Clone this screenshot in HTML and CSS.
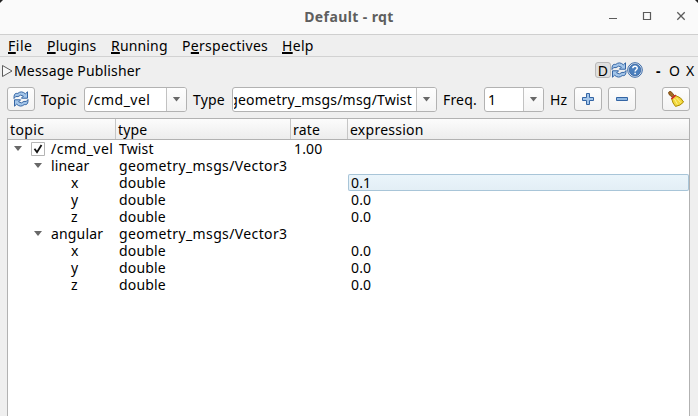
FILE: index.html
```html
<!DOCTYPE html>
<html lang="en">
<head>
<meta charset="utf-8">
<title>Default - rqt</title>
<link rel="stylesheet" href="styles.css">
</head>
<body>
<svg class="defs" width="0" height="0" aria-hidden="true">
  <symbol id="refresh" viewBox="0 0 16 16">
    <g fill="#a3c5e9" stroke="#3465a4" stroke-width="1" stroke-linejoin="round">
      <path d="M1 7.5Q.8 2.6 3.2 2.4H4.8Q8.5 -.8 12.4 2.8L14.5 .8V7.2H8.4L10.4 5.1Q7.6 2.9 5 5.6Q2.3 4.6 1 7.5Z"/>
      <path d="M15 8.5Q15.2 13.4 12.8 13.6H11.2Q7.5 16.8 3.6 13.2L1.5 15.2V8.8H7.6L5.6 10.9Q8.4 13.1 11 10.4Q13.7 11.4 15 8.5Z"/>
    </g>
  </symbol>
</svg>
<div class="window">
  <header class="titlebar">
    <h1>Default - rqt</h1>
    <svg class="controls" width="80" height="16" viewBox="0 0 80 16" fill="none" stroke="#5b5b5b">
      <path d="M1 10.5H9"/><path d="M35.5 4.5H42.5V11.5H35.5Z" stroke-width="1.2"/><path d="M69.3 4.3L76.7 11.7M76.7 4.3L69.3 11.7" stroke-width="1.3"/>
    </svg>
    <i class="corner left"></i><i class="corner right"></i>
  </header>
  <nav class="menubar">
    <span class="m-file"><u>F</u>ile</span><span class="m-plugins"><u>P</u>lugins</span><span class="m-running"><u>R</u>unning</span><span class="m-persp">P<u>e</u>rspectives</span><span class="m-help"><u>H</u>elp</span>
  </nav>
  <div class="dock">
    <svg width="12" height="14" viewBox="0 0 12 14"><path d="M1.5 1.5V12.5L11 7Z" fill="#f8f8f8" stroke="#5c5c5c"/></svg>
    <span class="dock-title">Message Publisher</span>
    <div class="dock-tools">
      <span class="dbtn">D</span>
      <svg width="16" height="16"><use href="#refresh"/></svg>
      <svg width="16" height="16" viewBox="0 0 16 16"><circle cx="8" cy="8" r="7.3" fill="#fff" stroke="#3465a4"/><circle cx="8" cy="8" r="5.9" fill="#4b7fbd" stroke="#2d5c9b" stroke-width=".7"/><path d="M5.8 6.2C5.9 3.6 10.4 3.7 10.2 6.2C10.1 7.8 8.1 7.7 8.1 9.6M8.1 10.7V12.2" fill="none" stroke="#fff" stroke-width="1.5"/></svg>
    </div>
    <span class="w-min">-</span><span class="w-o">O</span><span class="w-x">X</span>
  </div>
  <div class="toolbar">
    <button class="btn" aria-label="Refresh"><svg width="16" height="16"><use href="#refresh"/></svg></button>
    <label class="l-topic">Topic</label>
    <div class="combo c-topic"><div class="value"><span class="v-topic">/cmd_vel</span></div><i class="drop"></i></div>
    <label class="l-type">Type</label>
    <div class="combo c-type"><div class="value end"><span class="v-type">geometry_msgs/msg/Twist</span></div><i class="drop"></i></div>
    <label class="l-freq">Freq.</label>
    <div class="combo c-freq"><div class="value"><span>1</span></div><i class="drop"></i></div>
    <label class="l-hz">Hz</label>
    <button class="btn" aria-label="Add"><svg width="14" height="14" viewBox="0 0 14 14"><path d="M5.5 1.5H8.5V5.5H12.5V8.5H8.5V12.5H5.5V8.5H1.5V5.5H5.5Z" fill="#a3c5e9" stroke="#3465a4" stroke-linejoin="round"/></svg></button>
    <button class="btn minus" aria-label="Remove"><svg width="14" height="14" viewBox="0 0 14 14"><path d="M1.5 5.5H12.5V8.5H1.5Z" fill="#8fb8e3" stroke="#3465a4" stroke-linejoin="round"/></svg></button>
    <button class="btn clear" aria-label="Clear"><svg width="18" height="18" viewBox="0 0 18 18"><path d="M1.5 2.4Q3 .4 4.7 2.2L7.7 6L5.6 7.5L2 4.5Z" fill="#a56a22" stroke="#71430c" stroke-width=".8"/><path d="M8.5 5.5Q14.5 7.2 16.6 12Q13.5 15.8 8.5 16.4Q5.6 13.5 4.6 8.5Z" fill="#f2d83b" stroke="#ac8b05"/><path d="M4.4 8.8L8.8 5.2" stroke="#cf2929" stroke-width="1.7"/><path d="M7.5 9L10.5 14.5M9.5 8L13.7 12.5" stroke="#fff39a" stroke-width=".9"/></svg></button>
  </div>
  <div class="tree">
    <div class="row head"><div class="cell"><span class="h-topic">topic</span></div><div class="cell"><span class="h-type">type</span></div><div class="cell"><span class="h-rate">rate</span></div><div class="cell"><span class="h-expr">expression</span></div></div>
    <div class="row"><div class="cell"><i class="arrow"></i><svg class="check" width="14" height="14" viewBox="0 0 14 14"><path d="M.5 .5H13.5V13.5H.5Z" fill="#fff" stroke="#b4b4b4"/><path d="M3.5 6.8L6 10.2L10.5 3" fill="none" stroke="#111" stroke-width="1.8"/></svg><span class="t-cmd">/cmd_vel</span></div><div class="cell"><span class="t-twist">Twist</span></div><div class="cell"><span class="num">1.00</span></div><div class="cell"></div></div>
    <div class="row"><div class="cell l1"><i class="arrow"></i><span class="t-linear">linear</span></div><div class="cell"><span class="t-vec">geometry_msgs/Vector3</span></div><div class="cell"></div><div class="cell"></div></div>
    <div class="row"><div class="cell l2">x</div><div class="cell"><span class="t-double">double</span></div><div class="cell"></div><div class="cell selected"><span class="num">0.1</span></div></div>
    <div class="row"><div class="cell l2">y</div><div class="cell"><span class="t-double">double</span></div><div class="cell"></div><div class="cell"><span class="num">0.0</span></div></div>
    <div class="row"><div class="cell l2">z</div><div class="cell"><span class="t-double">double</span></div><div class="cell"></div><div class="cell"><span class="num">0.0</span></div></div>
    <div class="row"><div class="cell l1"><i class="arrow"></i><span class="t-angular">angular</span></div><div class="cell"><span class="t-vec">geometry_msgs/Vector3</span></div><div class="cell"></div><div class="cell"></div></div>
    <div class="row"><div class="cell l2">x</div><div class="cell"><span class="t-double">double</span></div><div class="cell"></div><div class="cell"><span class="num">0.0</span></div></div>
    <div class="row"><div class="cell l2">y</div><div class="cell"><span class="t-double">double</span></div><div class="cell"></div><div class="cell"><span class="num">0.0</span></div></div>
    <div class="row"><div class="cell l2">z</div><div class="cell"><span class="t-double">double</span></div><div class="cell"></div><div class="cell"><span class="num">0.0</span></div></div>
  </div>
</div>
</body>
</html>
```
FILE: styles.css
```css
* { box-sizing: border-box; }
body { margin: 0; background: #efefef; color: #000; font: 14px/17px "Noto Sans", "Open Sans", sans-serif; letter-spacing: .16px; }
.defs { position: absolute; }
.window { width: 698px; height: 416px; display: flex; flex-direction: column; overflow: hidden; white-space: nowrap; }
svg { display: block; flex: none; }
.titlebar { position: relative; height: 35px; flex: none; display: flex; align-items: center; justify-content: center; background: #fafafa; border-bottom: 1px solid #cfcfcf; }
.titlebar h1 { margin: 0 0 2px; font-size: 14px; font-weight: 700; color: #5e5e5e; letter-spacing: .4px; }
.controls { position: absolute; right: 10px; top: 8px; }
.corner { position: absolute; top: 0; width: 3px; height: 3px; background: #222; }
.left { left: 0; clip-path: polygon(0 0, 100% 0, 0 100%); }
.right { right: 0; clip-path: polygon(0 0, 100% 0, 100% 100%); }
.menubar { height: 22px; flex: none; display: flex; align-items: center; padding-left: 8px; border-bottom: 1px solid #d2d2d2; }
.menubar span { flex: none; }
u { text-underline-offset: 1px; text-decoration-thickness: 2px; text-decoration-skip-ink: none; }
.m-file { width: 39px; letter-spacing: .5px; }
.m-plugins { width: 64px; }
.m-running { width: 71px; }
.m-persp { width: 100px; letter-spacing: .3px; }
.m-help { letter-spacing: .3px; }
.dock { height: 27px; flex: none; display: flex; align-items: center; padding-left: 1px; }
.dock-title { margin-left: 1px; width: 581px; }
.dock-tools { display: flex; align-items: center; margin-top: -2px; }
.dbtn { width: 16px; height: 16px; line-height: 16px; text-align: center; background: #dfdfdf; border: 1px solid #b9b9b9; border-radius: 3px; }
.w-min { margin-left: 13px; width: 13px; font-weight: 700; }
.w-o { width: 17px; }
.toolbar { height: 30px; flex: none; display: flex; align-items: center; padding: 0 8px 0 7px; }
.btn { width: 28px; height: 24px; flex: none; display: flex; align-items: center; justify-content: center; padding: 0; border: 1px solid #b2b2b2; border-radius: 3px; background: linear-gradient(#fefefe, #f3f3f3); }
.minus { margin-left: 6px; }
.clear { margin-left: auto; }
label { flex: none; }
.l-topic { margin-left: 6px; width: 43px; letter-spacing: .4px; }
.l-type { margin-left: 6px; width: 39px; }
.l-freq { margin-left: 6px; width: 41px; }
.l-hz { margin-left: 6px; width: 24px; }
.combo { display: flex; flex: none; height: 25px; border: 1px solid #b2b2b2; border-radius: 3px; background: #fff; overflow: hidden; }
.c-topic { width: 103px; }
.c-type { width: 205px; }
.c-freq { width: 60px; }
.value { flex: 1; display: flex; align-items: center; overflow: hidden; margin-left: 1px; padding-left: 2px; }
.value.end { justify-content: flex-end; padding: 0 4px 0 0; }
.v-topic, .t-cmd { letter-spacing: .5px; }
.v-type { letter-spacing: .21px; }
.drop { width: 20px; border-left: 1px solid #c2c2c2; background: linear-gradient(#fefefe, #f3f3f3); display: flex; align-items: center; justify-content: center; }
.drop::after, .arrow::after { content: ""; width: 8px; height: 5px; background: #686868; clip-path: polygon(0 0, 100% 0, 50% 100%); }
.tree { margin: 4px 8px 0 7px; flex: 1; border: 1px solid #b2b2b2; border-bottom: 0; background: #fff; }
.row { display: grid; grid-template-columns: 108px 175px 57px 1fr; height: 17px; }
.cell { display: flex; align-items: center; padding-left: 3px; min-width: 0; }
.head { height: 21px; border-bottom: 1px solid #b2b2b2; background: linear-gradient(#fcfcfc, #ededed); }
.head .cell { padding-left: 2px; border-right: 1px solid #c6c6c6; }
.head .cell:last-child { border: 0; }
.h-topic { letter-spacing: .4px; }
.h-expr { letter-spacing: .25px; }
.t-vec { letter-spacing: .38px; }
.arrow { width: 14px; margin-left: 3px; flex: none; display: flex; }
.check { margin: 0 6px 0 3px; }
.l1 .arrow { margin-left: 23px; width: 17px; }
.cell.l2 { padding-left: 63px; }
.selected { background: linear-gradient(#ebf5fb, #e2eef5); box-shadow: inset 0 0 0 1px #a8c5d8; border-radius: 2px; }
```
